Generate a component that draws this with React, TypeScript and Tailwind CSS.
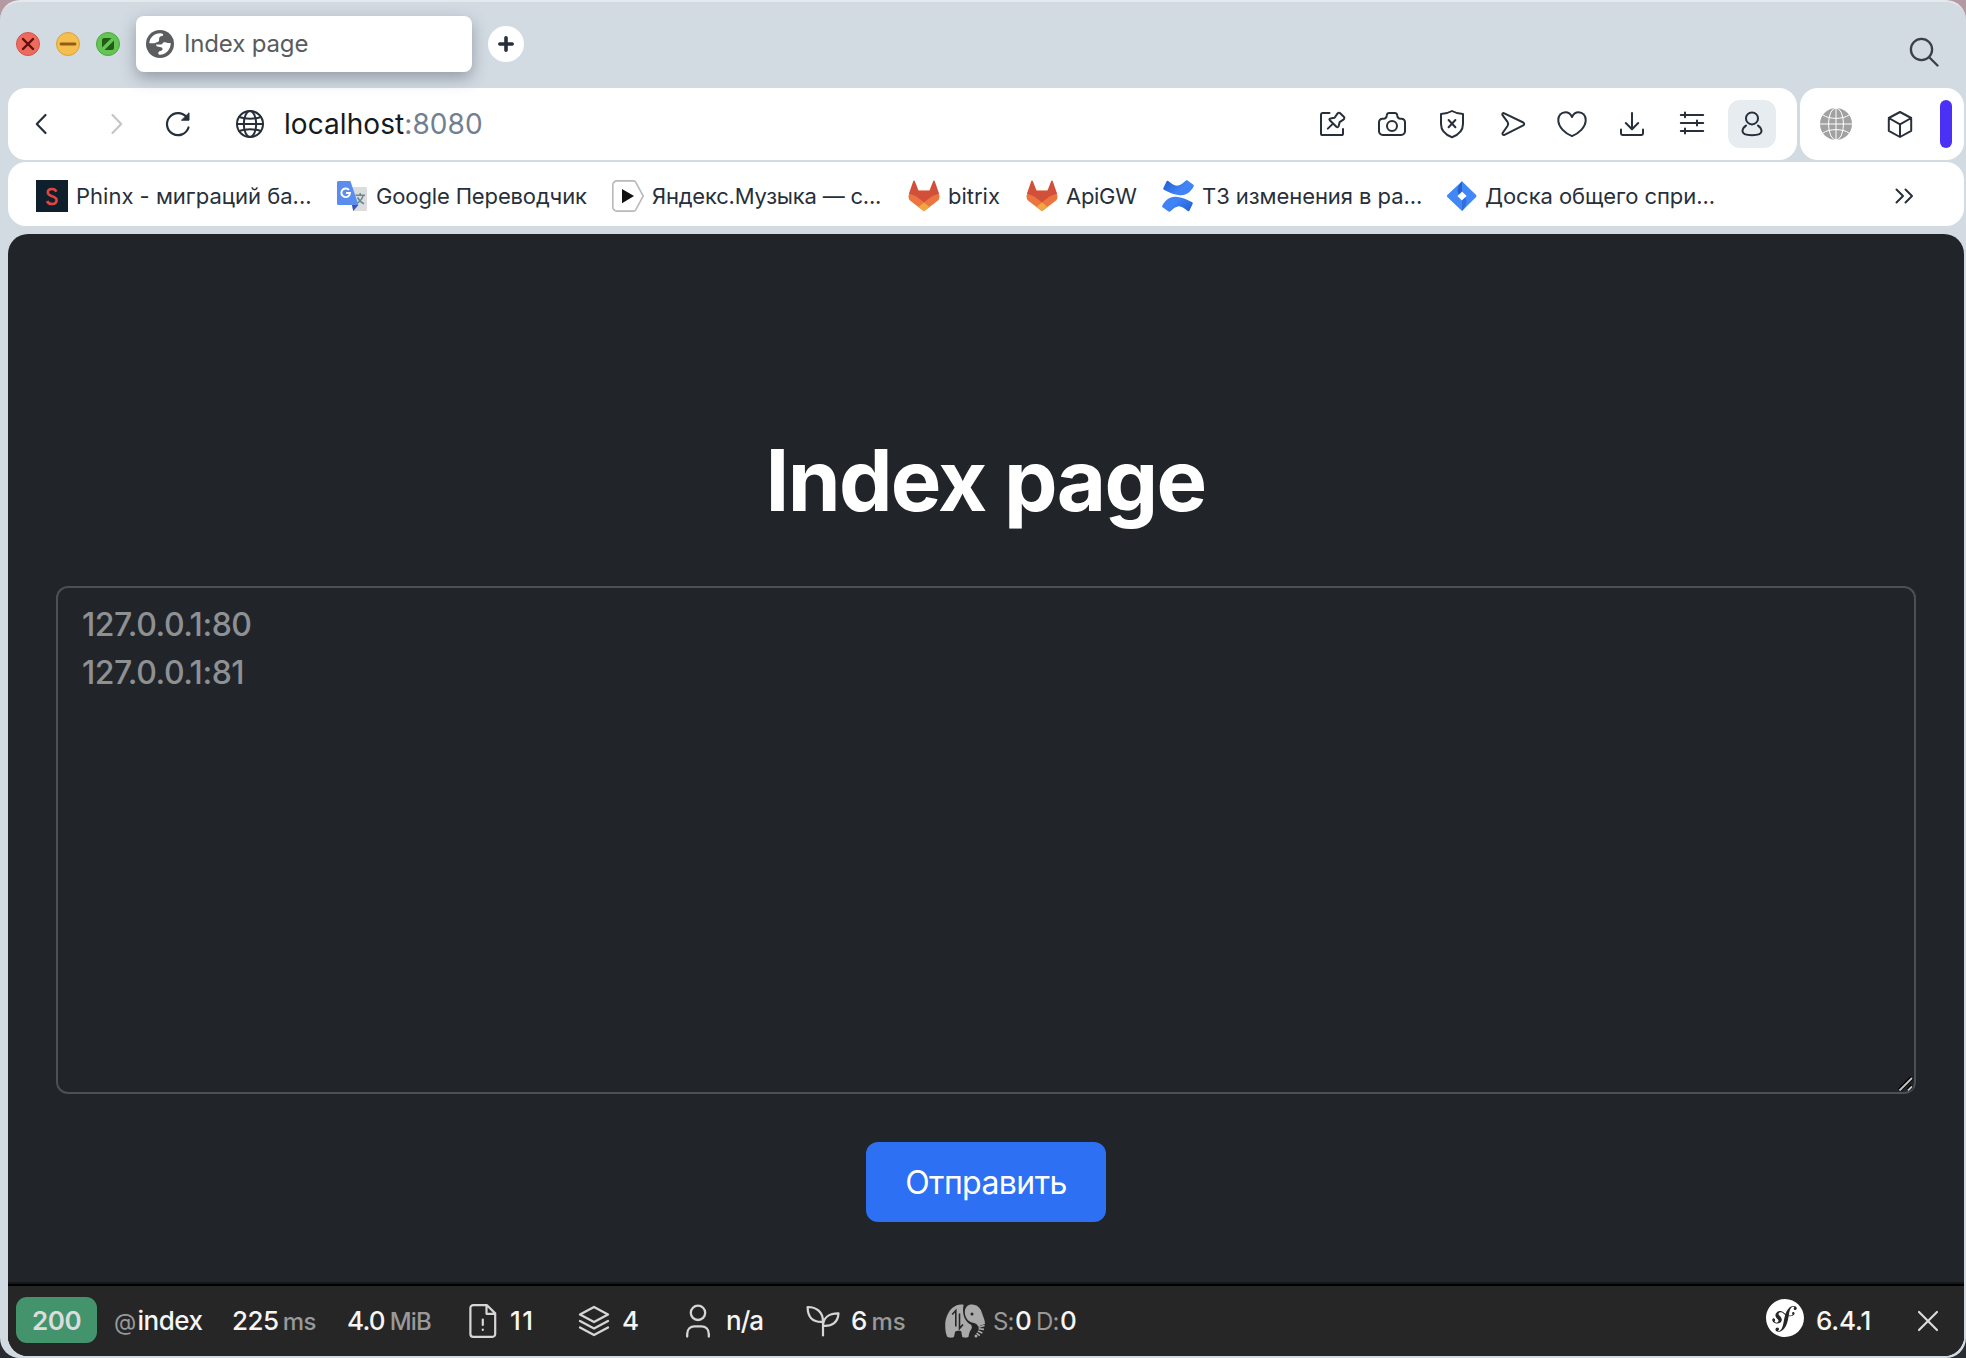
import React from 'react';
import { SiSymfony } from 'react-icons/si';

function Line({ children, className = 'size-8', w = 2 }: { children: React.ReactNode; className?: string; w?: number }) {
  return (
    <svg viewBox="0 0 32 32" className={`shrink-0 ${className}`} fill="none" stroke="currentColor" strokeWidth={w} strokeLinecap="round" strokeLinejoin="round">
      {children}
    </svg>
  );
}

const TOOLS: React.ReactNode[] = [
  <>
    <path d="M13.5 5H6.5A1.6 1.6 0 0 0 5 6.6V25.4A1.6 1.6 0 0 0 6.6 27H25.4A1.6 1.6 0 0 0 27 25.4V21" />
    <path d="M24.2 5.2 27.8 8.8C28.6 9.6 28.5 10.8 27.4 11.6L23.6 14.2 22.6 18.2C22.3 19.2 21.2 19.5 20.4 18.8L13.8 12.2C13.1 11.4 13.4 10.6 14.4 10.5L18.6 9.8 21.4 5.6C22.1 4.5 23.3 4.3 24.2 5.2zM17 15.6 11.8 20.6" />
  </>,
  <>
    <path d="M3 23.2V14.2A3.4 3.4 0 0 1 6.4 10.8H7.6C9.4 10.8 10.4 9.8 10.6 8.2L10.8 7.2C11 5.8 12 5 13.2 5H18.8C20 5 21 5.8 21.2 7.2L21.4 8.2C21.6 9.8 22.6 10.8 24.4 10.8H25.6A3.4 3.4 0 0 1 29 14.2V23.2A3.8 3.8 0 0 1 25.2 27H6.8A3.8 3.8 0 0 1 3 23.2z" />
    <circle cx="16" cy="18" r="5" />
  </>,
  <>
    <path d="M16 3C12.8 4.8 9 5.8 5 6.1V16C5 22.5 9.5 26.8 16 29.2 22.5 26.8 27 22.5 27 16V6.1C23 5.8 19.2 4.8 16 3z" />
    <path d="M12.6 12 19.4 19.2M19.4 12 12.6 19.2" />
  </>,
  <path d="M8.3 5.3 27.3 14.5C28.5 15.2 28.5 16.8 27.3 17.4L8.5 26.9C7.2 27.5 6 26.2 6.6 25L11.5 18C12.4 16.6 12.4 15.2 11.5 13.8L6.5 7.2C5.8 5.9 7 4.7 8.3 5.3z" />,
  <path d="M16 9C14.5 5.6 12 4.2 9.4 4.2 5.2 4.2 2.3 7.6 2.3 12 2.3 19.4 9.5 25.5 16 28.2 22.5 25.5 29.7 19.4 29.7 12 29.7 7.6 26.8 4.2 22.6 4.2 20 4.2 17.5 5.6 16 9z" />,
  <>
    <path d="M5 21.5V25.6A1.4 1.4 0 0 0 6.4 27H25.6A1.4 1.4 0 0 0 27 25.6V21.5" />
    <path d="M16 5V21M9.8 15 16 21.2 22.2 15" />
  </>,
  <path d="M4.8 7H27.2M4.8 15H27.2M4.8 23H27.2M9 4.6V9.2M21 12.6V17.4M9 20.6V25.4" />,
];

function Fox() {
  return (
    <svg viewBox="0 0 32 32" className="size-8 shrink-0">
      <path fill="#eb7440" d="M3 10.5 .7 15.2C.2 17.5.8 19.6 2.6 21L16 31.2 29.4 21C31.2 19.6 31.8 17.5 31.3 15.2L29 10.5z" />
      <path fill="#d1503a" d="M5.2 1.2C5.5.3 6.5.3 6.9 1.2L10.6 10.8H21.4L25.1 1.2C25.5.3 26.5.3 26.8 1.2L31.2 14C26 14.4 20.5 18.4 16 22.6 11.5 18.4 6 14.4.8 14z" />
      <path fill="#f0a73f" d="M16 22.6 21.6 26.9 16 31.2 10.4 26.9z" />
    </svg>
  );
}

const RIBBON =
  'M4.6 1.2C5 .5 5.7.5 6.3 1 9.5 3.6 12.5 6 16 5.6 19.5 5.2 21.5 2.5 24 .6 24.6.1 25.3.2 25.9.7L31.4 4.8C32 5.3 32 5.9 31.6 6.6 28.5 12.2 24.5 15.8 18 15.3 11.5 14.8 6.5 12.2 1.8 9.7 1.2 9.3 1.1 8.7 1.4 8.1z';

const BOOKMARKS: { text: string; cls: string; icon: React.ReactNode }[] = [
  {
    text: 'Phinx - миграций ба...',
    cls: 'w-[300px] tracking-[0px]',
    icon: (
      <svg viewBox="0 0 32 32" className="size-8 shrink-0">
        <path fill="#101f2c" d="M0 0H32V32H0z" />
        <path fill="none" stroke="#e0453f" strokeWidth="2.6" d="M20.4 11.6C19.6 9.8 18.2 9 16 9 13.2 9 11.8 10.5 11.8 12.6 11.8 17.3 20.6 15 20.6 20.2 20.6 22.5 19 24 16 24 13.4 24 11.8 22.9 11.2 21" />
      </svg>
    ),
  },
  {
    text: 'Google Переводчик',
    cls: 'w-[276px] tracking-[-0.14px]',
    icon: (
      <svg viewBox="-1 0 32 32" className="size-8 shrink-0">
        <path fill="#dcdcdc" d="M12 7H28.5A1.5 1.5 0 0 1 30 8.5V29.5A1.5 1.5 0 0 1 28.5 31H16z" />
        <path fill="none" stroke="#6b8891" strokeWidth="1.5" d="M18.5 15.2H28M23.2 13V15.2M26.2 15.4C25.4 18.8 23 21.6 19.8 23.6M20.6 17.4C21.8 20.2 24 22.4 27 23.8" />
        <path fill="#3f51b5" d="M15 25H21.4L16.2 31z" />
        <path fill="#5b8def" d="M1.5 1H13.4L21.5 25H1.5A1.5 1.5 0 0 1 0 23.5V2.5A1.5 1.5 0 0 1 1.5 1z" />
        <path fill="none" stroke="#fff" strokeWidth="1.9" d="M12 9.8C11.2 9 10.2 8.5 9 8.5A4.3 4.3 0 1 0 13 13H9" />
      </svg>
    ),
  },
  {
    text: 'Яндекс.Музыка — с...',
    cls: 'w-[296px] tracking-[-0.21px]',
    icon: (
      <svg viewBox="0 0 32 32" className="size-8 shrink-0">
        <path fill="#fff" stroke="#b9b9b9" strokeWidth="1.6" d="M5 .9H21.5C22.5.9 23.2 1.3 23.7 2.2L31.2 16 23.7 29.8C23.2 30.7 22.5 31.1 21.5 31.1H5A4.2 4.2 0 0 1 .8 26.9V5.1A4.2 4.2 0 0 1 5 .9z" />
        <path fill="#111" d="M10 9V23.2L22 16.1z" />
      </svg>
    ),
  },
  { text: 'bitrix', cls: 'w-[118px] tracking-[0px]', icon: <Fox /> },
  { text: 'ApiGW', cls: 'w-[136px] tracking-[-0.3px]', icon: <Fox /> },
  {
    text: 'ТЗ изменения в ра...',
    cls: 'w-[284px] tracking-[-0.06px]',
    icon: (
      <svg viewBox="0 0 32 32" className="size-8 shrink-0">
        <defs>
          <linearGradient id="ribbon" x1="0" y1="0" x2="1" y2=".5">
            <stop offset="0" stopColor="#1f5ccf" />
            <stop offset=".7" stopColor="#3f83f6" />
          </linearGradient>
        </defs>
        <path fill="url(#ribbon)" d={RIBBON} />
        <path transform="rotate(180 16 16)" fill="url(#ribbon)" d={RIBBON} />
      </svg>
    ),
  },
  {
    text: 'Доска общего спри...',
    cls: 'w-[300px] tracking-[-0.05px]',
    icon: (
      <svg viewBox="0 0 32 32" className="-mr-px size-8 shrink-0">
        <path fill="#4287f6" fillRule="evenodd" d="M16 1.3 30.1 15.1C30.6 15.6 30.6 16.4 30.1 16.9L16 30.9 1.3 16.9C.8 16.4.8 15.6 1.3 15.1zM16 11.5 11.4 16 16 20.5 20.6 16z" />
        <path fill="#2463d1" d="M16 1.3V11.5L13 14.4C10.5 11.6 11 6.3 16 1.3z" />
        <path fill="#2f70df" d="M16 30.9V20.5L19 17.6C21.5 20.4 21 25.9 16 30.9z" />
      </svg>
    ),
  },
];

function Unit({ children }: { children: React.ReactNode }) {
  return <span className="text-2xl text-[#999]">{children}</span>;
}

export default function App() {
  return (
    <div className="h-[1358px] w-[1966px] overflow-hidden bg-linear-to-b from-[#b39aa2] from-50% to-[#2a2c34] to-50% font-['Inter',sans-serif]">
      <div className="flex h-full flex-col overflow-hidden rounded-[20px] border-t-2 border-[#e4e9ed] bg-[#d2dae2]">
        {/* tab strip */}
        <header className="relative z-10 flex h-[86px] shrink-0 items-start pt-[14px] pl-4">
          <div className="flex h-14 w-[120px] items-center gap-4">
            <svg viewBox="0 0 24 24" className="size-6">
              <circle cx="12" cy="12" r="11.5" fill="#ed6a5e" stroke="#d5544a" />
              <path d="M7 7 17 17M17 7 7 17" stroke="#5e0f0a" strokeWidth="2.4" strokeLinecap="round" />
            </svg>
            <svg viewBox="0 0 24 24" className="size-6">
              <circle cx="12" cy="12" r="11.5" fill="#f5bf4f" stroke="#d9a13c" />
              <path d="M5 12H19" stroke="#925c16" strokeWidth="2.8" strokeLinecap="round" />
            </svg>
            <svg viewBox="0 0 24 24" className="size-6">
              <circle cx="12" cy="12" r="11.5" fill="#62c554" stroke="#4fa73e" />
              <path d="M6 15.5V8A2 2 0 0 1 8 6H15.5zM8.5 18H16A2 2 0 0 0 18 16V8.5z" fill="#225c14" />
            </svg>
          </div>
          <div className="flex h-14 w-[336px] items-center gap-2.5 rounded-lg bg-white pl-2.5 shadow-[0_6px_16px_rgba(70,80,92,0.45)]">
            <svg viewBox="0 0 28 28" className="size-7 shrink-0">
              <circle cx="14" cy="14" r="14" fill="#5c5d5f" />
              <path fill="#fff" d="M3.3 13.2C3.6 7.8 8 3.3 14.3 3.3 16.2 3.4 17.4 4.2 17.2 5 17 6.2 15.2 6 14 6.8 12.3 8 13.8 9.6 12.8 11.2 11.8 12.7 9.8 12 8.8 13.2z" />
              <path fill="#fff" d="M10 14.6H15C16.4 14.6 16.5 13 17.4 12.5 18.8 11.8 20.5 13.4 24.7 13 24.8 19 20.5 24.7 13.8 24.8 12 24.7 12 23.2 12.6 22 13.2 20.8 15.8 21.2 16.4 19.8 17.2 17.8 15.6 17 13.8 17 12 17 10 16.6 10 14.6z" />
            </svg>
            <span className="text-2xl tracking-[-0.15px] text-[#5a5b5d]">Index page</span>
          </div>
          <div className="mt-2.5 ml-4 flex size-9 items-center justify-center rounded-full bg-white">
            <svg viewBox="0 0 16 16" className="size-4">
              <path d="M8 1.8V14.2M1.8 8H14.2" stroke="#27303a" strokeWidth="3.6" strokeLinecap="round" />
            </svg>
          </div>
          <svg viewBox="0 0 30 30" className="mt-[21px] mr-[27px] ml-auto size-[30px]" fill="none" stroke="#3c4043" strokeWidth="2.3" strokeLinecap="round">
            <circle cx="12.5" cy="12.5" r="10.6" />
            <path d="M20.2 20.2 28.5 28.5" />
          </svg>
        </header>

        {/* address bar and side panel */}
        <div className="flex h-[72px] shrink-0 gap-[3px] pr-0.5 pl-2 text-[#27303a]">
          <div className="flex w-[1789px] items-center rounded-[18px] bg-white pr-[21px] pl-4">
            <Line className="ml-px size-8" w={2.2}>
              <path d="M20.5 7 11.8 16 20.5 25" />
            </Line>
            <Line className="ml-[44px] size-8 text-[#c3c5c8]" w={2.2}>
              <path d="M11.5 7 20.2 16 11.5 25" />
            </Line>
            <Line className="ml-[29px] size-8" w={2.2}>
              <path d="M26.5 19.5A11 11 0 1 1 24.6 9.3" />
              <path d="M27 5.2V12.2H19.8z" fill="currentColor" strokeWidth={1} />
            </Line>
            <Line className="ml-[40px] size-8">
              <circle cx="16" cy="16" r="13" />
              <ellipse cx="16" cy="16" rx="6.2" ry="13" />
              <path d="M3 16H29M5.2 9C11 11.2 21 11.2 26.8 9M5.2 23C11 20.8 21 20.8 26.8 23" />
            </Line>
            <span className="ml-[18px] text-[28px] tracking-[0.07px] text-[#16191d]">localhost</span>
            <span className="text-[28px] tracking-[0.1px] text-[#718091]">:8080</span>
            <div className="ml-auto flex items-center gap-7">
              {TOOLS.map((t, i) => (
                <Line key={i}>{t}</Line>
              ))}
              <div className="-ml-2 flex size-12 items-center justify-center rounded-xl bg-[#e7ecf0]">
                <Line>
                  <circle cx="16" cy="10.4" r="6" />
                  <path d="M10 17.6C7.8 19 6.5 21.2 6.5 23.3 6.5 26.3 11 27.2 16 27.2 21 27.2 25.5 26.3 25.5 23.3 25.5 21.2 24.2 19 22 17.6" />
                </Line>
              </div>
            </div>
          </div>
          <div className="flex w-[164px] items-center rounded-[18px] bg-white pl-5">
            <svg viewBox="0 0 32 32" className="size-8" fill="none" stroke="#fff" strokeWidth="1">
              <circle cx="16" cy="16" r="16" fill="#a1a1a1" stroke="none" />
              <ellipse cx="16" cy="16" rx="7.5" ry="16" />
              <path d="M16 0V32M0 16H32M3 7C9 11.5 23 11.5 29 7M3 25C9 20.5 23 20.5 29 25" />
            </svg>
            <Line className="ml-8 size-8">
              <path d="M16 4 27.2 10V22.8L16 29 4.8 22.8V10zM4.8 10 16 16.4 27.2 10M16 16.4V29" />
            </Line>
            <div className="ml-6 h-12 w-3 rounded-full bg-[#4a31f5]" />
          </div>
        </div>

        {/* bookmarks */}
        <nav className="mt-0.5 mr-0.5 ml-2 flex h-16 shrink-0 items-center rounded-[18px] bg-white pt-1 pl-7 text-[22px] text-[#27303a]">
          {BOOKMARKS.map((b) => (
            <div key={b.text} className={`flex shrink-0 items-center gap-2 whitespace-nowrap ${b.cls}`}>
              {b.icon}
              <span>{b.text}</span>
            </div>
          ))}
          <Line className="ml-[142px] size-8">
            <path d="M8.5 9.5 15 16 8.5 22.5M17.5 9.5 24 16 17.5 22.5" />
          </Line>
        </nav>

        {/* page */}
        <main className="mt-2 mr-0.5 mb-0.5 ml-2 flex min-h-0 flex-1 flex-col overflow-hidden rounded-[20px] bg-[#212529]">
          <div className="flex flex-1 flex-col items-center px-12">
            <h1 className="mt-[195px] -ml-px h-[104px] text-[85px] leading-[104px] font-bold tracking-[-1.7px] text-white">Index page</h1>
            <textarea
              readOnly
              className="mt-[53px] h-[508px] w-full resize-none rounded-xl border-2 border-[#495057] bg-transparent px-6 pt-[13px] text-[32px] leading-[48px] font-[450] tracking-[-0.48px] text-[#8e9194] outline-none"
              value={'127.0.0.1:80\n127.0.0.1:81'}
            />
            <svg viewBox="0 0 16 16" className="-mt-[18px] mr-[2px] size-4 self-end" fill="none">
              <path d="M1.5 14 14 1.5M10 14 14 10" stroke="#000" strokeWidth="4" />
              <path d="M1.5 14.5 14 2M10 14.5 14 10.5" stroke="#c4c4c4" strokeWidth="1.8" />
            </svg>
            <button className="mt-[50px] h-20 w-60 rounded-xl bg-[#2d70f4] pt-0.5 text-[32px] font-[440] tracking-[-0.57px] text-white">Отправить</button>
          </div>
          <footer className="flex h-[72px] shrink-0 items-center border-t-2 border-black bg-[#262626] pl-2 text-[26px] leading-9 font-medium whitespace-nowrap text-[#f5f5f5] shadow-[0_-2px_0_#14171a]">
            <div className="-mt-0.5 flex h-[46px] w-[81px] items-center justify-center rounded-[11px] bg-[#43946c] pt-0.5 font-semibold tracking-[-0.43px] text-[#dcdcdc]">200</div>
            <div className="ml-[17px] flex w-[118px] items-baseline font-medium tracking-[-0.5px]">
              <span className="w-[23.5px] text-[23px] font-normal text-[#999]">@</span>index
            </div>
            <div className="flex w-[115px] items-baseline gap-[4px] tracking-[-0.5px]">225<Unit>ms</Unit></div>
            <div className="flex w-[122px] items-baseline gap-[5px] tracking-[-0.8px]">4.0<Unit>MiB</Unit></div>
            <svg viewBox="0 0 28 34" className="-mt-px h-[34px] w-7" fill="none" stroke="#d6d6d6" strokeWidth="2.2" strokeLinejoin="round" strokeLinecap="round">
              <path d="M4.2 1.2H18L26.2 9.4V30A2.8 2.8 0 0 1 23.4 32.8H4.2A2.8 2.8 0 0 1 1.4 30V4A2.8 2.8 0 0 1 4.2 1.2zM17.5 1.5V9.8H26M13.8 15.5V21M13.8 25.5V26" />
            </svg>
            <span className="ml-[13px] w-[68px] tracking-[1.5px]">11</span>
            <svg viewBox="0 0 32 32" className="-mt-px size-8" fill="none" stroke="#d6d6d6" strokeWidth="2.3" strokeLinejoin="round" strokeLinecap="round">
              <path d="M16 2 30 9.5 16 17 2 9.5zM2 16 16 23.5 30 16M2 22.5 16 30 30 22.5" />
            </svg>
            <span className="ml-3 w-[63px]">4</span>
            <svg viewBox="0 0 26 34" className="-mt-px h-[34px] w-[26px]" fill="none" stroke="#d6d6d6" strokeWidth="2.3" strokeLinecap="round">
              <circle cx="13" cy="8.8" r="7.2" />
              <path d="M2.2 32.5V30C2.2 25 5.5 22.3 9.5 22.3H16.5C20.5 22.3 23.8 25 23.8 30V32.5" />
            </svg>
            <span className="ml-[15px] w-[80px] tracking-[-1px]">n/a</span>
            <svg viewBox="0 0 34 32" className="-mt-px h-8 w-[34px]" fill="none" stroke="#d6d6d6" strokeWidth="2.2" strokeLinecap="round" strokeLinejoin="round">
              <path d="M17 30.5V16.5C17 7 10.5 2 1.6 2 1.6 12 6.5 17.5 17 16.8M17 20.5C17.5 12 24 8.2 32.5 8.4 32 17 26.5 21.5 17 20.8" />
            </svg>
            <div className="ml-[11px] flex w-[94px] items-baseline gap-[4px] tracking-[0px]">6<Unit>ms</Unit></div>
            <svg viewBox="0 0 40 34" className="-mt-px h-[34px] w-10">
              <path fill="#aaa" d="M18.6 .8C15.5 -.2 11 .8 7.5 3.8 2.5 8.5 .2 15 .2 21.5 .2 26.5 1 30.5 2.3 32.8 3.8 34 7.5 34 9 32.8L10.2 27.5C12 26.6 14.5 26.6 16.2 27.2L17.2 32.8C18.5 34 22 34 23.5 32.8 24 30 24.6 27.5 26.2 25.2 27.3 23.6 27 22 25.8 20.6 20.5 17.8 16.5 11 18.6 .8z" />
              <path fill="#aaa" d="M24.5 .8C30.5 -.8 35.5 3 37 9 38 13 40 15.5 40 20L33 22.5C32.5 20.5 30.5 19.3 28 18.8 22.5 17.5 19.8 13 19.8 8 19.8 4.5 21.5 1.8 24.5 .8z" />
              <path fill="none" stroke="#aaa" strokeWidth="1.6" d="M33.5 23.2 39.6 21.6M33.6 24.8 39 25.4M33 27 37.4 29M31.6 29 34.8 31.6" />
              <circle cx="31" cy="32" r="1.5" fill="#aaa" />
              <circle cx="27" cy="10" r="1.5" fill="#262626" />
              <path fill="none" stroke="#262626" strokeWidth="1.6" d="M7.2 10.5 10.8 6.5V22.5M14.5 9.5V24.5L18 20.5" />
            </svg>
            <div className="ml-[8px] flex items-baseline tracking-[-0.8px]">
              <span className="w-[22px] text-2xl font-normal text-[#999]">S:</span>0
              <span className="ml-[5px] w-[24px] text-2xl font-normal text-[#999]">D:</span>0
            </div>
            <SiSymfony className="mt-[-6px] ml-auto size-[38px] text-white" />
            <span className="ml-[12px] w-[100px] tracking-[-0.2px]">6.4.1</span>
            <svg viewBox="0 0 24 24" className="mr-[24px] size-6" fill="none" stroke="#dcdcdc" strokeWidth="2.2" strokeLinecap="round">
              <path d="M3 3 21 21M21 3 3 21" />
            </svg>
          </footer>
        </main>
      </div>
    </div>
  );
}
